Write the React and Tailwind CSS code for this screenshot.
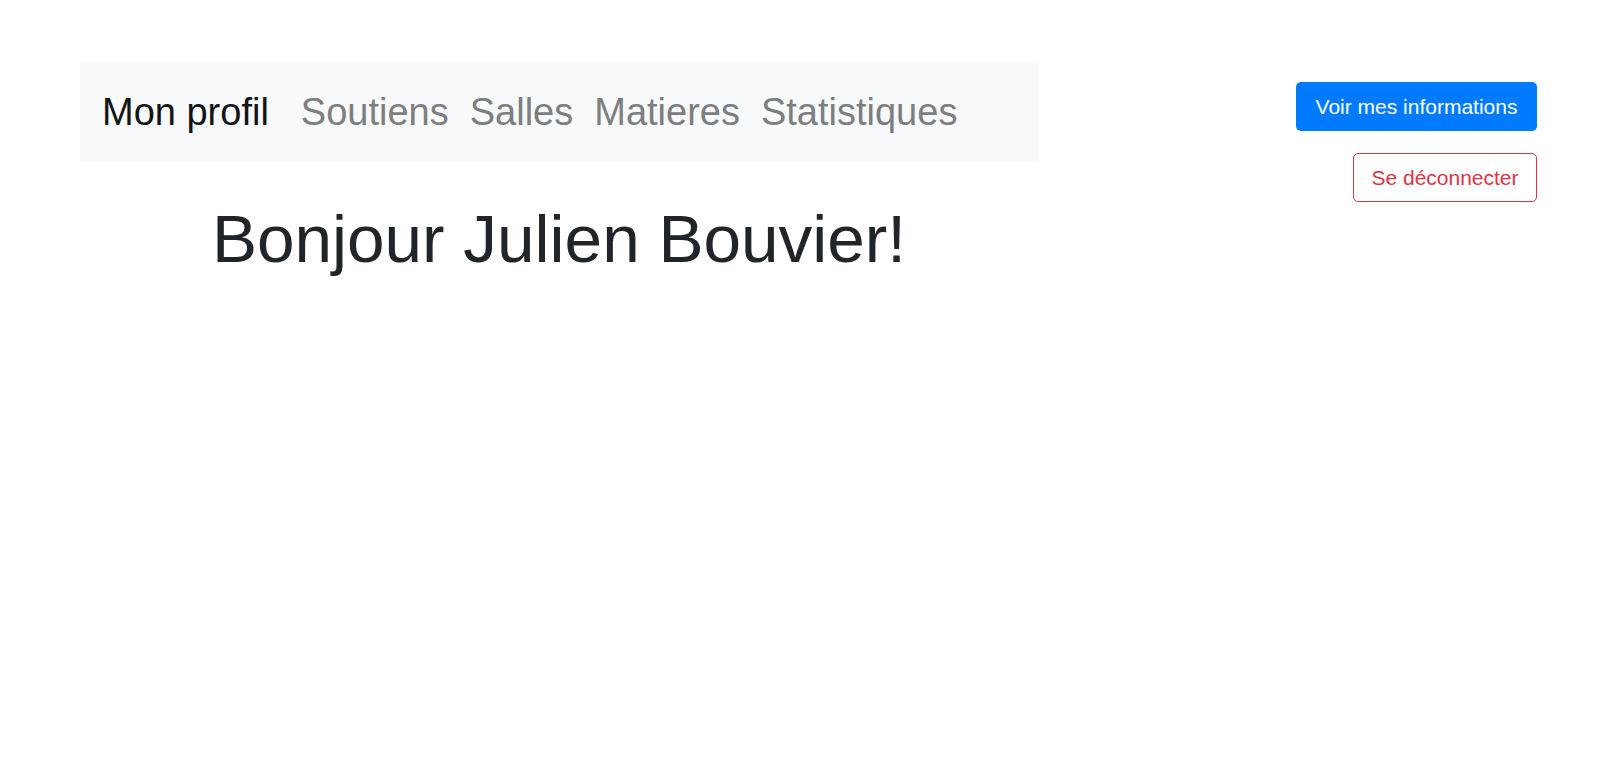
const NavLink = ({ label, active }) => (
  <a
    href="#"
    className={
      active
        ? "text-[#121416] mr-[11px]"
        : "text-[#7d7e7f] hover:text-[#4a4b4c]"
    }
  >
    {label}
  </a>
);

const App = () => {
  return (
    <div
      className="min-h-screen bg-white flex"
      style={{ fontFamily: '"Liberation Sans", Arial, sans-serif' }}
    >
      {/* colonne gauche : navbar + salutation */}
      <div className="ml-[80px] w-[958px] mt-[61px] flex flex-col">
        <nav className="bg-[#f8f9fa] h-[100px] flex items-center pl-[22px] pt-[4px] gap-[21px] text-[38px] leading-[1.2]">
          <NavLink label="Mon profil" active />
          <NavLink label="Soutiens" />
          <NavLink label="Salles" />
          <NavLink label="Matieres" />
          <NavLink label="Statistiques" />
        </nav>
        <h1 className="mt-[38px] text-center text-[67.5px] leading-[80px] font-light text-[#212529]">
          Bonjour Julien Bouvier!
        </h1>
      </div>

      {/* colonne droite : actions */}
      <div className="flex-1 flex flex-col items-end pt-[82px] pr-[63px] gap-[22px]">
        <button className="bg-[#007bff] text-white text-[21px] leading-none h-[49px] w-[241px] rounded-[5px] hover:bg-[#0069d9]">
          Voir mes informations
        </button>
        <button className="border border-[#dc3545] text-[#dc3545] text-[21px] leading-none h-[49px] w-[184px] rounded-[5px] hover:bg-[#dc3545] hover:text-white">
          Se déconnecter
        </button>
      </div>
    </div>
  );
};

export default App;
